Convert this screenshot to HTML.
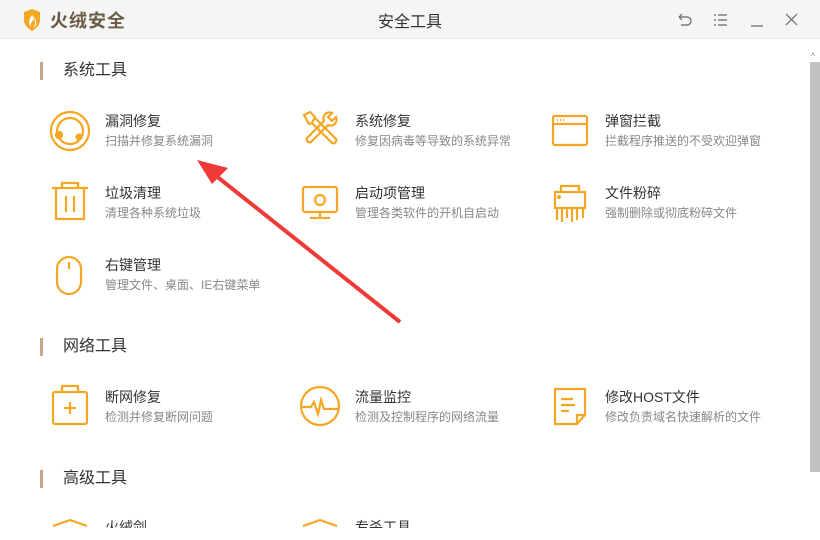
<!DOCTYPE html>
<html><head><meta charset="utf-8"><style>
*{margin:0;padding:0;box-sizing:border-box}
body{width:820px;height:540px;overflow:hidden;background:#fff;font-family:"Liberation Sans","Noto Sans CJK SC",sans-serif;position:relative}
.tb{position:absolute;left:0;top:0;width:820px;height:39px;background:#f5f5f5;border-bottom:1px solid #e6e6e6}
.logo{position:absolute;left:50px;top:7px;font-size:18px;font-weight:bold;color:#6b5a45;letter-spacing:1px}
.ttl{position:absolute;left:0;width:820px;top:8px;text-align:center;font-size:16px;color:#333}
.sec{position:absolute;left:40px;font-size:16px;color:#333;padding-left:23px;line-height:20px}
.sec:before{content:"";position:absolute;left:0;top:1px;width:3px;height:18px;background:#c6a886}
.t{position:absolute;font-size:14px;color:#333;white-space:nowrap;line-height:16px}
.s{position:absolute;font-size:12px;color:#888;white-space:nowrap;line-height:14px}
.sb{position:absolute;left:808px;top:40px;width:12px;height:500px;background:#fff}
.th{position:absolute;left:810px;top:62px;width:10px;height:410px;background:#c2c2c2}
</style></head><body>
<div class="tb">
<svg style="position:absolute;left:22px;top:9px" width="20" height="22" viewBox="0 0 20 22"><path d="M2 3 L10 0 L18 3 L18 11 C18 17 13 20 10 22 C7 20 2 17 2 11Z" fill="#f5a623"/><path d="M10 6 C7 10 6 14 9 18 C8 14 11 12 12 9 C13 13 14 15 11 19 C15 17 16 12 10 6Z" fill="#fff"/></svg>
<div class="logo">火绒安全</div>
<div class="ttl">安全工具</div>
<svg style="position:absolute;left:676px;top:12px" width="130" height="16" viewBox="0 0 130 16" fill="none" stroke="#666" stroke-width="1.2"><path d="M3 5 H11 A4 4 0 0 1 11 13 H5 M3 5 L6 2 M3 5 L6 8"/><path d="M38 3h2M42 3h9M38 8h2M42 8h9M38 13h2M42 13h9"/><path d="M75 14h12"/><path d="M110 2l11 11M121 2l-11 11"/></svg>
</div>
<div class="sb"></div><div class="th"></div>
<div style="position:absolute;left:811px;top:51px;font-size:9px;color:#888">^</div>

<div class="sec" style="top:61px">系统工具</div>
<div class="sec" style="top:337px">网络工具</div>
<div class="sec" style="top:469px">高级工具</div>

<svg style="position:absolute;left:0;top:0" width="820" height="540" fill="none" stroke="#f5a623" stroke-width="2.2">
<circle cx="70" cy="131" r="19"/><circle cx="70" cy="131" r="13"/><circle cx="59" cy="135" r="3" fill="#f5a623"/><circle cx="79" cy="137" r="2.5" fill="#f5a623"/>
<path d="M304 115l6-3 5 5-3 6-3 1zM311 122l21 21a3 3 0 0 0 4-4l-21-21"/><path d="M336 117a6 6 0 0 1-8 8l-17 17a3 3 0 0 1-4-4l17-17a6 6 0 0 1 8-8l-4 4 4 4z"/>
<rect x="553" y="116" width="34" height="29" rx="2"/><path d="M553 124h34"/><path d="M557 120h1M560 120h1M563 120h1"/>
<path d="M52 188h36M62 188v-5h16v5M56 188v31h28v-31M66 196v16M74 196v16"/>
<rect x="303" y="187" width="34" height="25" rx="2"/><path d="M320 212v6M310 218h20"/><circle cx="320" cy="200" r="5"/>
<path d="M561 192v-6h18v6M555 192h30v16h-30zM557 208v12M562 208v14M567 208v10M572 208v14M577 208v12M583 208v10"/><circle cx="559" cy="197" r="1" fill="#f5a623"/>
<rect x="57" y="257" width="24" height="37" rx="12"/><path d="M69 262v7"/>
<rect x="53" y="392" width="34" height="32" rx="2"/><path d="M62 392v-6h16v6M70 402v12M64 408h12"/>
<circle cx="320" cy="406" r="19"/><path d="M301 407h10l3-5 4 12 3-14 3 9h15"/>
<path d="M555 389h30v26l-8 9h-22zM577 424v-9h8M561 399h12M561 405h14M561 411h8"/>
<path d="M53 526l17-6 17 6"/><path d="M303 526l17-6 17 6"/>
</svg>

<div class="t" style="left:105px;top:113px">漏洞修复</div><div class="s" style="left:105px;top:134px">扫描并修复系统漏洞</div>
<div class="t" style="left:355px;top:113px">系统修复</div><div class="s" style="left:355px;top:134px">修复因病毒等导致的系统异常</div>
<div class="t" style="left:605px;top:113px">弹窗拦截</div><div class="s" style="left:605px;top:134px">拦截程序推送的不受欢迎弹窗</div>
<div class="t" style="left:105px;top:185px">垃圾清理</div><div class="s" style="left:105px;top:206px">清理各种系统垃圾</div>
<div class="t" style="left:355px;top:185px">启动项管理</div><div class="s" style="left:355px;top:206px">管理各类软件的开机自启动</div>
<div class="t" style="left:605px;top:185px">文件粉碎</div><div class="s" style="left:605px;top:206px">强制删除或彻底粉碎文件</div>
<div class="t" style="left:105px;top:257px">右键管理</div><div class="s" style="left:105px;top:278px">管理文件、桌面、IE右键菜单</div>
<div class="t" style="left:105px;top:389px">断网修复</div><div class="s" style="left:105px;top:410px">检测并修复断网问题</div>
<div class="t" style="left:355px;top:389px">流量监控</div><div class="s" style="left:355px;top:410px">检测及控制程序的网络流量</div>
<div class="t" style="left:605px;top:389px">修改HOST文件</div><div class="s" style="left:605px;top:410px">修改负责域名快速解析的文件</div>
<div style="position:absolute;left:0;top:519px;width:808px;height:9px;overflow:hidden">
<div class="t" style="left:105px;top:0">火绒剑</div><div class="t" style="left:355px;top:0">专杀工具</div></div>
<div style="position:absolute;left:0;top:528px;width:808px;height:12px;background:#fff"></div>

<svg style="position:absolute;left:0;top:0" width="820" height="540"><path d="M400 322 L215 175" stroke="#f03a3a" stroke-width="4"/><path d="M197 160 L228 168 L212 184Z" fill="#f03a3a"/></svg>
</body></html>
